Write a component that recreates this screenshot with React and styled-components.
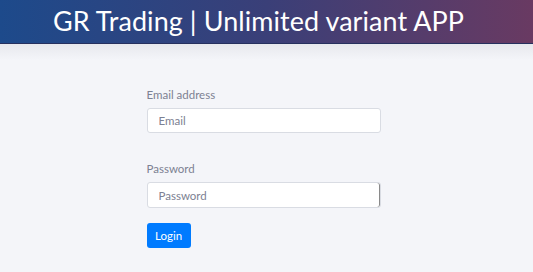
import React from "react";
import styled, { createGlobalStyle } from "styled-components";

const Global = createGlobalStyle`
  html, body {
    margin: 0;
    padding: 0;
    background: #f4f5f9;
    font-family: "Nunito", Lato, "Open Sans", sans-serif;
  }
`;

const Header = styled.header`
  height: 43px;
  background: linear-gradient(90deg, #1d4a8b 0%, #3a3f78 50%, #693a62 100%);
  border-bottom: 1px solid #26305e;
  display: flex;
  align-items: center;
  justify-content: center;
`;

const Title = styled.h1`
  margin: 0;
  color: #fff;
  font-family: Lato, sans-serif;
  font-weight: 400;
  font-size: 26.9px;
  letter-spacing: 0.1px;
  padding-bottom: 2px;
  margin-right: 16px;
`;

const Main = styled.main`
  background: linear-gradient(180deg, #e7e8ed 0px, #f4f5f9 16px);
  height: 228px;
  padding-top: 44px;
  box-sizing: border-box;
  display: flex;
  justify-content: center;
`;

const Form = styled.form`
  width: 234px;
  margin-right: 6px;
  display: flex;
  flex-direction: column;
`;

const Group = styled.div`
  display: flex;
  flex-direction: column;
  margin-bottom: ${(p) => p.$gap || 0}px;
`;

const Label = styled.label`
  font-family: Lato, sans-serif;
  font-size: 11.5px;
  color: #7c8192;
  margin-bottom: 6px;
  line-height: 14px;
`;

const Input = styled.input`
  box-sizing: border-box;
  height: ${(p) => p.$h || 25}px;
  width: 100%;
  border: 1px solid #d9dce3;
  border-radius: 3px;
  background: #fff;
  padding: 0 11px;
  font-family: Lato, sans-serif;
  font-size: 11.5px;
  color: #495057;
  outline: none;
  &::placeholder {
    color: #7c8192;
  }
  ${(p) => p.$bar && `box-shadow: inset -1px 0 0 #8a8a8a;`}
`;

const Button = styled.button`
  align-self: flex-start;
  width: 44px;
  height: 25px;
  border: none;
  border-radius: 3px;
  background: #007bff;
  color: #fff;
  font-family: Lato, sans-serif;
  font-size: 11.5px;
  padding: 0;
`;

export default function App() {
  return (
    <>
      <Global />
      <Header>
        <Title>GR Trading | Unlimited variant APP</Title>
      </Header>
      <Main>
        <Form onSubmit={(e) => e.preventDefault()}>
          <Group $gap={29}>
            <Label>Email address</Label>
            <Input type="email" placeholder="Email" $h={25} />
          </Group>
          <Group $gap={15}>
            <Label>Password</Label>
            <Input type="password" placeholder="Password" $h={26} $bar />
          </Group>
          <Button type="submit">Login</Button>
        </Form>
      </Main>
    </>
  );
}
